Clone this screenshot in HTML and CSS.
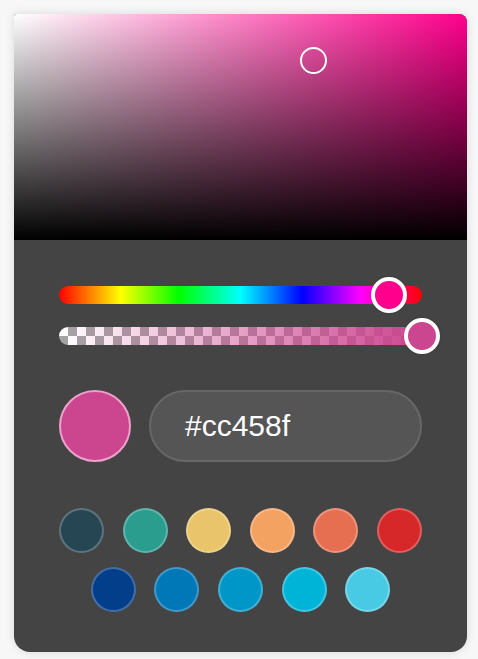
FILE: index.html
```html
<!DOCTYPE html>
<html lang="en">
<head>
<meta charset="utf-8">
<title>Color picker</title>
<link rel="stylesheet" href="styles.css">
</head>
<body>
<div class="picker">
  <div class="saturation">
    <div class="sat-thumb"></div>
  </div>
  <div class="controls">
    <div class="track hue">
      <div class="thumb hue-thumb"></div>
    </div>
    <div class="track alpha">
      <div class="alpha-fill"></div>
      <div class="thumb alpha-thumb"></div>
    </div>
    <div class="value-row">
      <div class="preview"></div>
      <div class="hex-field">#cc458f</div>
    </div>
    <div class="swatches">
      <div class="swatch-row">
        <span class="swatch c1"></span>
        <span class="swatch c2"></span>
        <span class="swatch c3"></span>
        <span class="swatch c4"></span>
        <span class="swatch c5"></span>
        <span class="swatch c6"></span>
      </div>
      <div class="swatch-row">
        <span class="swatch c7"></span>
        <span class="swatch c8"></span>
        <span class="swatch c9"></span>
        <span class="swatch c10"></span>
        <span class="swatch c11"></span>
      </div>
    </div>
  </div>
</div>
</body>
</html>
```

FILE: styles.css
```css
html, body {
  margin: 0;
  padding: 0;
  background: #f7f7f7;
}
body {
  padding: 14px;
  font-family: "Liberation Sans", Arial, sans-serif;
}
.picker {
  width: 453px;
  background: #444444;
  border-radius: 3px 8px 16px 16px;
  box-shadow: 0 0 10px rgba(0, 0, 0, 0.12);
  overflow: hidden;
}
.saturation {
  position: relative;
  height: 226px;
  background:
    linear-gradient(to top, #000 0%, rgba(0, 0, 0, 0) 100%),
    linear-gradient(to right, #fff 0%, hsl(327, 100%, 50%) 100%);
}
.sat-thumb {
  position: absolute;
  left: 286px;
  top: 33px;
  width: 23px;
  height: 23px;
  border: 2px solid #fff;
  border-radius: 50%;
}
.controls {
  padding: 46px 45px 40px;
}
.track {
  position: relative;
  height: 18px;
  border-radius: 9px;
}
.hue {
  background: linear-gradient(to right, #f00 0%, #ff0 17%, #0f0 33%, #0ff 50%, #00f 67%, #f0f 83%, #f00 100%);
}
.alpha {
  margin-top: 23px;
  background: conic-gradient(#a4a4a4 0 25%, #fff 0 50%, #a4a4a4 0 75%, #fff 0) 0 0 / 18px 18px;
}
.alpha-fill {
  height: 100%;
  border-radius: 9px;
  background: linear-gradient(to right, rgba(204, 69, 143, 0) 0%, #cc458f 100%);
}
.thumb {
  position: absolute;
  top: 50%;
  width: 28px;
  height: 28px;
  border: 4px solid #fff;
  border-radius: 50%;
  transform: translate(-50%, -50%);
  box-shadow: 0 0 2px rgba(0, 0, 0, 0.2);
}
.hue-thumb {
  left: 90.9%;
  background: hsl(327, 100%, 50%);
}
.alpha-thumb {
  left: 100%;
  background: #cc458f;
}
.value-row {
  display: flex;
  align-items: center;
  gap: 18px;
  margin-top: 45px;
}
.preview {
  flex: none;
  width: 68px;
  height: 68px;
  border-radius: 50%;
  background: #cc458f;
  border: 2px solid #eda2cc;
}
.hex-field {
  flex: 1;
  height: 68px;
  box-sizing: content-box;
  display: flex;
  align-items: center;
  padding-left: 34px;
  border: 2px solid #676767;
  border-radius: 36px;
  background: #555555;
  color: #fff;
  font-size: 30px;
  line-height: 1;
}
.swatches {
  margin-top: 46px;
  display: flex;
  flex-direction: column;
  gap: 14px;
}
.swatch-row {
  display: flex;
  justify-content: center;
  gap: 18.6px;
}
.swatch {
  display: block;
  width: 41px;
  height: 41px;
  border-radius: 50%;
  border: 2px solid rgba(255, 255, 255, 0.25);
}
.c1 { background-color: #264653; }
.c2 { background-color: #2a9d8f; }
.c3 { background-color: #e9c46a; }
.c4 { background-color: #f4a261; }
.c5 { background-color: #e76f51; }
.c6 { background-color: #d62828; }
.c7 { background-color: #023e8a; }
.c8 { background-color: #0077b6; }
.c9 { background-color: #0096c7; }
.c10 { background-color: #00b4d8; }
.c11 { background-color: #48cae4; }
```
